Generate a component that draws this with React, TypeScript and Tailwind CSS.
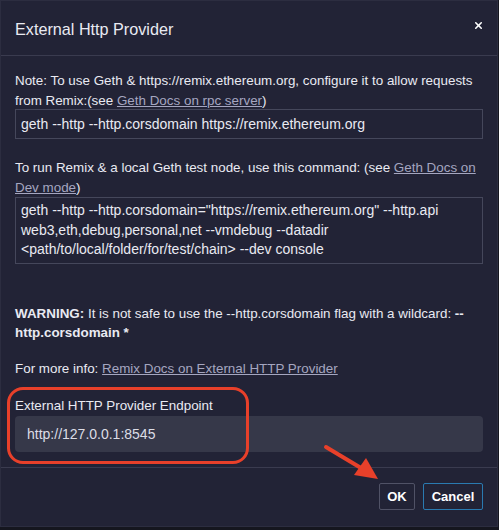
import { X } from 'lucide-react'

const link = 'text-[#a5a6c0] underline decoration-[#a5a6c0]'

export default function App() {
  return (
    <div className="relative w-[499px] h-[530px] bg-[#15161f] overflow-hidden" style={{ fontFamily: '"Liberation Sans", Arial, sans-serif' }}>
      <div className="w-[498px] h-[527px] bg-[#222336] border border-[#2c2d40] flex flex-col text-[#e9eaf2]">
        {/* Header */}
        <div className="h-[55px] shrink-0 flex items-center justify-between pl-[14px] pr-[15px] border-b border-[#3a3b4f]">
          <h5 className="text-[16.2px] font-medium pt-[3px]">External Http Provider</h5>
          <X className="h-[11px] w-[11px] text-white mb-[6px] mr-[-2px]" strokeWidth={3.5} />
        </div>

        {/* Body */}
        <div className="flex-1 px-[14px] pt-[15px] text-[13.4px] leading-[20px]">
          <div>
            Note: To use Geth &amp; https://remix.ethereum.org, configure it to allow requests from Remix:(see{' '}
            <span className={link}>Geth Docs on rpc server</span>)
          </div>
          <div className="mt-[-2px] h-[30px] border border-[#45475b] px-[5px] flex items-center text-[14px]">
            geth --http --http.corsdomain https://remix.ethereum.org
          </div>

          <div className="mt-[19px]">
            To run Remix &amp; a local Geth test node, use this command: (see{' '}
            <span className={link}>Geth Docs on Dev mode</span>)
          </div>
          <div className="mt-[-1px] h-[67px] border border-[#45475b] px-[5px] pt-[3px] leading-[19.5px] text-[14px]">
            geth --http --http.corsdomain="https://remix.ethereum.org" --http.api web3,eth,debug,personal,net --vmdebug --datadir &lt;path/to/local/folder/for/test/chain&gt; --dev console
          </div>

          <div className="mt-[40px] leading-[19px]">
            <b>WARNING:</b> It is not safe to use the --http.corsdomain flag with a wildcard: <b>--http.corsdomain *</b>
          </div>

          <div className="mt-[17px]">
            For more info: <span className={link}>Remix Docs on External HTTP Provider</span>
          </div>

          <div className="mt-[17px]">External HTTP Provider Endpoint</div>
          <div className="h-[36px] bg-[#363849] rounded-[4px] flex items-center px-[12px] text-[14px] text-[#dcdde6]">
            http://127.0.0.1:8545
          </div>
        </div>

        {/* Footer */}
        <div className="h-[59px] shrink-0 border-t border-[#3a3b4f] flex items-center justify-end gap-[8px] pr-[14px] pb-[1px]">
          <button className="h-[27px] w-[36px] border border-[#505266] rounded-[2px] text-[13px] font-bold text-white">OK</button>
          <button className="h-[27px] w-[60px] border border-[#2a7ab0] rounded-[2px] text-[13px] font-bold text-white">Cancel</button>
        </div>
      </div>

      {/* Annotation: red outline round the endpoint field */}
      <div className="absolute left-[7px] top-[387px] w-[242px] h-[77px] border-[3px] border-[#e8402a] rounded-[16px]" />

      {/* Annotation: arrow toward OK */}
      <svg className="absolute left-[320px] top-[440px]" width="64" height="44" viewBox="0 0 64 44">
        <line x1="6" y1="7" x2="46" y2="31" stroke="#e8402a" strokeWidth="4" strokeLinecap="round" />
        <polygon points="58,39 34,35 46,18" fill="#e8402a" />
      </svg>
    </div>
  )
}
